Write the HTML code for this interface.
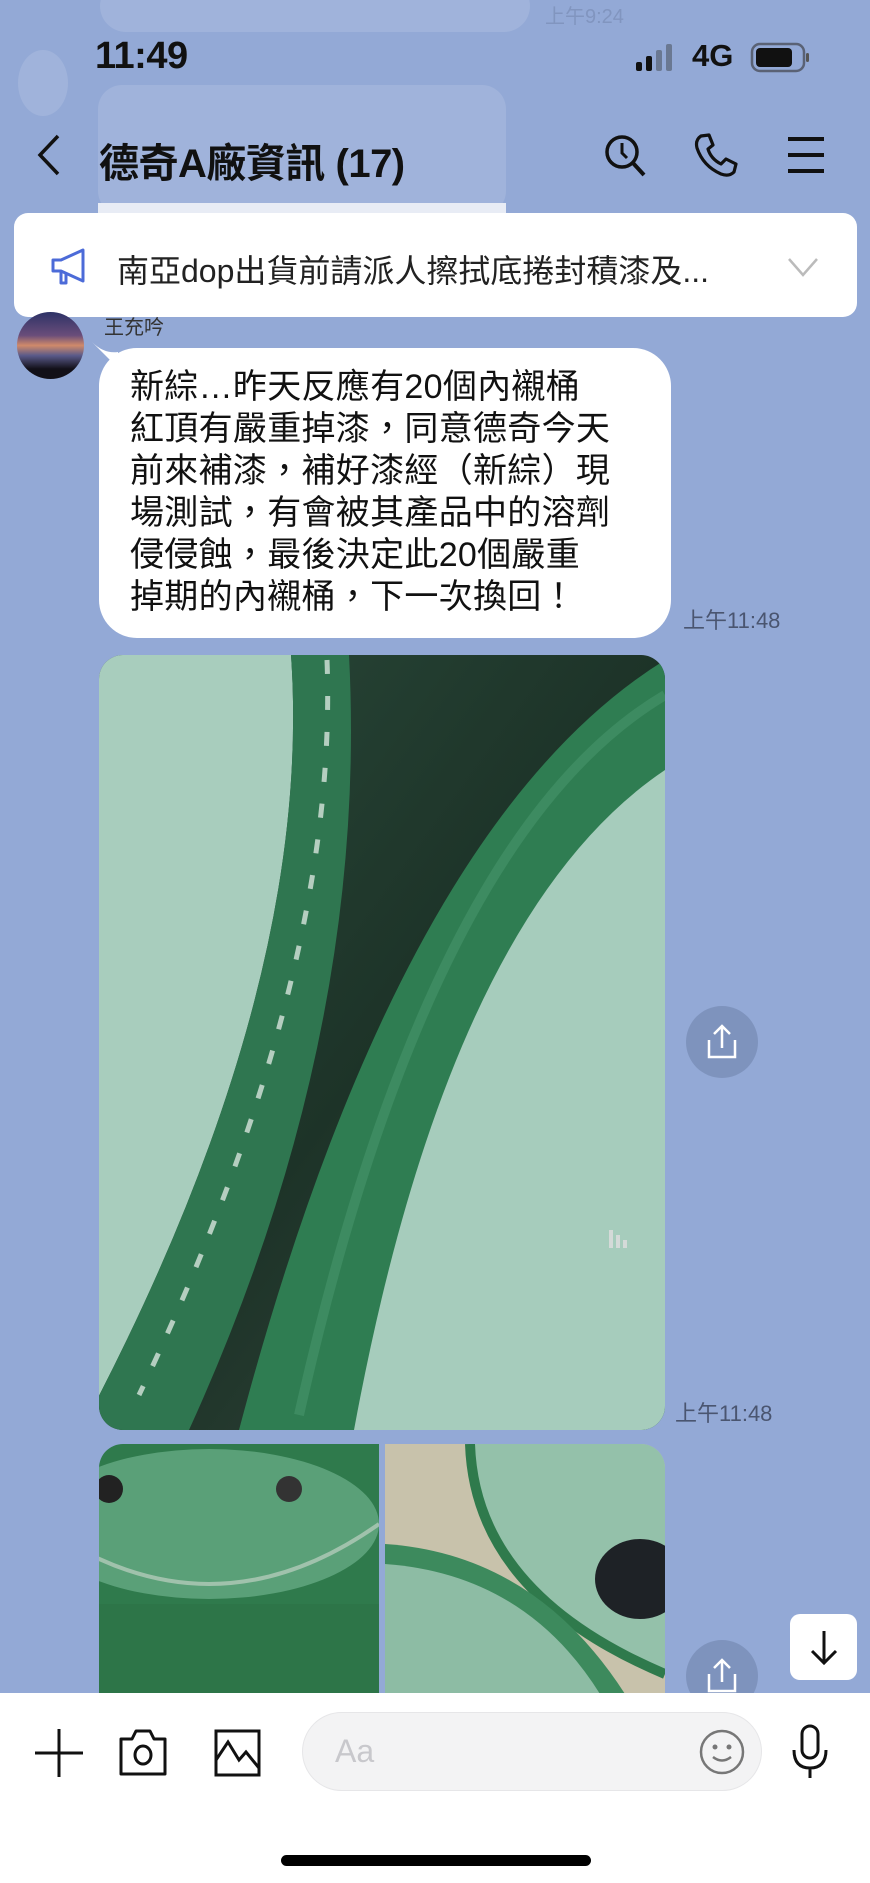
<!DOCTYPE html>
<html><head><meta charset="utf-8">
<style>
*{margin:0;padding:0;box-sizing:border-box}
body{width:870px;height:1883px;background:#93a9d6;position:relative;overflow:hidden;font-family:"Liberation Sans","Noto Sans CJK TC",sans-serif;color:#111}
.abs{position:absolute}
</style></head><body>
<div class="abs" style="left:100px;top:-20px;width:430px;height:52px;border-radius:26px;background:rgba(255,255,255,0.12)"></div>
<div class="abs" style="left:545px;top:0px;font-size:20px;color:rgba(60,70,100,0.2)">上午9:24</div>
<div class="abs" style="left:18px;top:50px;width:50px;height:66px;border-radius:50%;background:rgba(255,255,255,0.12)"></div>
<div class="abs" style="left:98px;top:85px;width:408px;height:130px;border-radius:24px;background:rgba(255,255,255,0.12)"></div>
<div class="abs" style="left:98px;top:203px;width:408px;height:10px;background:#e8ecf5"></div>

<div class="abs" style="left:95px;top:35px;font-size:38px;font-weight:bold;letter-spacing:-0.5px">11:49</div>
<svg class="abs" style="left:636px;top:44px" width="44" height="28"><rect x="0" y="18" width="6" height="9" rx="2" fill="#111"/><rect x="10" y="12" width="6" height="15" rx="2" fill="#111"/><rect x="20" y="6" width="6" height="21" rx="2" fill="#6a7892"/><rect x="30" y="0" width="6" height="27" rx="2" fill="#6a7892"/></svg>
<div class="abs" style="left:692px;top:38px;font-size:31px;font-weight:bold">4G</div>
<svg class="abs" style="left:750px;top:42px" width="62" height="32"><rect x="2" y="2" width="52" height="27" rx="8" fill="none" stroke="#333" stroke-width="2.5" opacity=".6"/><rect x="6" y="6" width="36" height="19" rx="4" fill="#111"/><rect x="56" y="11" width="3" height="9" rx="1.5" fill="#555"/></svg>

<svg class="abs" style="left:34px;top:132px" width="30" height="46"><path d="M24 4 L6 23 L24 42" fill="none" stroke="#111" stroke-width="3.5"/></svg>
<div class="abs" style="left:99px;top:131px;font-size:40px;font-weight:bold;letter-spacing:-0.5px">德奇A廠資訊 (17)</div>
<svg class="abs" style="left:602px;top:132px" width="46" height="46"><circle cx="20" cy="20" r="15" fill="none" stroke="#111" stroke-width="3.5"/><path d="M20 11 V21 L25 26" fill="none" stroke="#111" stroke-width="3"/><path d="M31 31 L42 43" stroke="#111" stroke-width="4"/></svg>
<svg class="abs" style="left:693px;top:132px" width="46" height="46"><path d="M8 4 L16 3 L20 13 L15 17 Q18 27 28 32 L33 27 L43 32 L41 40 Q36 45 28 42 Q10 34 4 16 Q2 8 8 4 Z" fill="none" stroke="#111" stroke-width="3.2" stroke-linejoin="round"/></svg>
<svg class="abs" style="left:786px;top:135px" width="40" height="40"><path d="M2 4 H38 M2 20 H38 M2 36 H38" stroke="#111" stroke-width="4"/></svg>

<div class="abs" style="left:14px;top:213px;width:843px;height:104px;background:#fff;border-radius:14px"></div>
<svg class="abs" style="left:50px;top:247px" width="40" height="40"><path d="M3 13 H11 L33 3 V34 L11 24 H3 Z M11 24 V36 H16 V26" fill="none" stroke="#4c6bd8" stroke-width="3" stroke-linejoin="round"/></svg>
<div class="abs" style="left:117px;top:246px;font-size:32px;color:#222">南亞dop出貨前請派人擦拭底捲封積漆及...</div>
<svg class="abs" style="left:786px;top:255px" width="34" height="24"><path d="M3 4 L17 20 L31 4" fill="none" stroke="#bbb" stroke-width="2.5"/></svg>

<div class="abs" style="left:17px;top:312px;width:67px;height:67px;border-radius:50%;background:linear-gradient(180deg,#2d3266 0%,#6a4d7a 35%,#d08a6a 50%,#5a5a8a 65%,#121018 85%)"></div>
<div class="abs" style="left:104px;top:311px;font-size:20px;color:#333">王充吟</div>

<svg class="abs" style="left:90px;top:340px" width="30" height="30"><path d="M2 2 Q14 14 28 12 L28 28 Z" fill="#fff"/></svg>
<div class="abs" style="left:99px;top:348px;width:572px;height:290px;background:#fff;border-radius:38px"></div>
<div class="abs" style="left:130px;top:366px;width:535px;font-size:34px;line-height:42px;color:#111;white-space:nowrap;letter-spacing:0.3px">新綜…昨天反應有20個內襯桶<br>紅頂有嚴重掉漆，同意德奇今天<br>前來補漆，補好漆經（新綜）現<br>場測試，有會被其產品中的溶劑<br>侵侵蝕，最後決定此20個嚴重<br>掉期的內襯桶，下一次換回！</div>
<div class="abs" style="left:683px;top:603px;font-size:22px;color:#4a5570">上午11:48</div>

<svg class="abs" style="left:99px;top:655px;border-radius:24px" width="566" height="775" viewBox="0 0 566 775">
<defs><linearGradient id="dk" x1="0" y1="0" x2="1" y2="1"><stop offset="0" stop-color="#2a4a3a"/><stop offset=".5" stop-color="#1d3328"/><stop offset="1" stop-color="#3a4a40"/></linearGradient></defs>
<rect width="566" height="775" fill="url(#dk)"/>
<path d="M0 0 H192 Q215 330 -10 760 V0 Z" fill="#a8cdbd"/>
<path d="M192 0 Q215 330 -10 760 L0 775 H90 Q270 380 250 0 Z" fill="#2f7650"/>
<path d="M228 5 Q240 320 40 740" fill="none" stroke="#e3ece6" stroke-width="5" stroke-dasharray="14 22" opacity=".75"/>
<path d="M566 5 Q300 170 140 775 H566 Z" fill="#2f7d52"/>
<path d="M566 115 Q350 260 255 775 H566 Z" fill="#a6ccbc"/>
<path d="M566 40 Q330 180 200 760" fill="none" stroke="#4c9a70" stroke-width="10" opacity=".5"/>
<g fill="#ddd" opacity=".85"><rect x="510" y="575" width="4" height="18"/><rect x="517" y="580" width="4" height="13"/><rect x="524" y="585" width="4" height="8"/></g>
</svg>
<div class="abs" style="left:675px;top:1396px;font-size:22px;color:#4a5570">上午11:48</div>
<div class="abs" style="left:686px;top:1006px;width:72px;height:72px;border-radius:50%;background:rgba(110,130,170,0.55)"></div>
<svg class="abs" style="left:704px;top:1022px" width="36" height="40"><path d="M18 4 V26 M10 12 L18 4 L26 12 M5 18 V35 H31 V18" fill="none" stroke="#fff" stroke-width="2.5"/></svg>

<svg class="abs" style="left:99px;top:1444px;border-radius:24px 0 0 0" width="280" height="250" viewBox="0 0 280 250">
<rect width="280" height="250" fill="#2f7a4c"/>
<ellipse cx="110" cy="80" rx="170" ry="75" fill="#5aa078"/>
<path d="M-60 80 Q110 200 280 80" fill="none" stroke="#cfd8cf" stroke-width="4" opacity=".6"/>
<circle cx="10" cy="45" r="14" fill="#222"/><circle cx="190" cy="45" r="13" fill="#333"/>
<rect x="0" y="160" width="280" height="90" fill="#2d7548"/>
</svg>
<svg class="abs" style="left:385px;top:1444px;border-radius:0 24px 0 0" width="280" height="250" viewBox="0 0 280 250">
<rect width="280" height="250" fill="#c8c2ab"/>
<path d="M85 0 Q90 150 280 230 V0 Z" fill="#94c1aa"/>
<path d="M85 0 Q90 150 280 230" fill="none" stroke="#2f7a4c" stroke-width="10"/>
<path d="M0 100 Q150 110 240 250 H0 Z" fill="#3d8a5d"/>
<path d="M0 120 Q140 130 215 250 H0 Z" fill="#8dbca4"/>
<ellipse cx="255" cy="135" rx="45" ry="40" fill="#1e2226"/>
</svg>
<div class="abs" style="left:686px;top:1640px;width:72px;height:72px;border-radius:50%;background:rgba(110,130,170,0.55)"></div>
<svg class="abs" style="left:704px;top:1656px" width="36" height="40"><path d="M18 4 V26 M10 12 L18 4 L26 12 M5 18 V35 H31 V18" fill="none" stroke="#fff" stroke-width="2.5"/></svg>
<div class="abs" style="left:790px;top:1614px;width:67px;height:66px;border-radius:10px;background:#fff"></div>
<svg class="abs" style="left:806px;top:1628px" width="36" height="40"><path d="M18 3 V35 M6 23 L18 35 L30 23" fill="none" stroke="#111" stroke-width="3"/></svg>

<div class="abs" style="left:0;top:1693px;width:870px;height:190px;background:#fff"></div>
<svg class="abs" style="left:33px;top:1727px" width="52" height="52"><path d="M26 2 V50 M2 26 H50" stroke="#111" stroke-width="3"/></svg>
<svg class="abs" style="left:118px;top:1727px" width="50" height="50"><path d="M3 12 H14 L18 4 H32 L36 12 H47 V47 H3 Z" fill="none" stroke="#111" stroke-width="3" stroke-linejoin="round"/><ellipse cx="25" cy="28" rx="8" ry="9" fill="none" stroke="#111" stroke-width="3"/></svg>
<svg class="abs" style="left:213px;top:1728px" width="50" height="50"><rect x="3" y="3" width="43" height="44" fill="none" stroke="#111" stroke-width="3"/><path d="M3 32 L15 14 L26 32 L33 24 L46 40" fill="none" stroke="#111" stroke-width="3"/></svg>
<div class="abs" style="left:302px;top:1712px;width:460px;height:79px;border-radius:40px;background:#f3f3f4;border:1px solid #e6e6e8"></div>
<div class="abs" style="left:335px;top:1733px;font-size:32px;color:#c8c8cc">Aa</div>
<svg class="abs" style="left:698px;top:1728px" width="48" height="48"><circle cx="24" cy="24" r="21" fill="none" stroke="#777" stroke-width="2.5"/><circle cx="17" cy="19" r="2.5" fill="#777"/><circle cx="31" cy="19" r="2.5" fill="#777"/><path d="M15 29 Q24 36 33 29" fill="none" stroke="#777" stroke-width="2.5"/></svg>
<svg class="abs" style="left:790px;top:1724px" width="40" height="56"><rect x="12" y="2" width="16" height="32" rx="8" fill="none" stroke="#111" stroke-width="3"/><path d="M4 26 Q4 44 20 44 Q36 44 36 26 M20 44 V54" fill="none" stroke="#111" stroke-width="3"/></svg>
<div class="abs" style="left:281px;top:1855px;width:310px;height:11px;border-radius:6px;background:#000"></div>
</body></html>
